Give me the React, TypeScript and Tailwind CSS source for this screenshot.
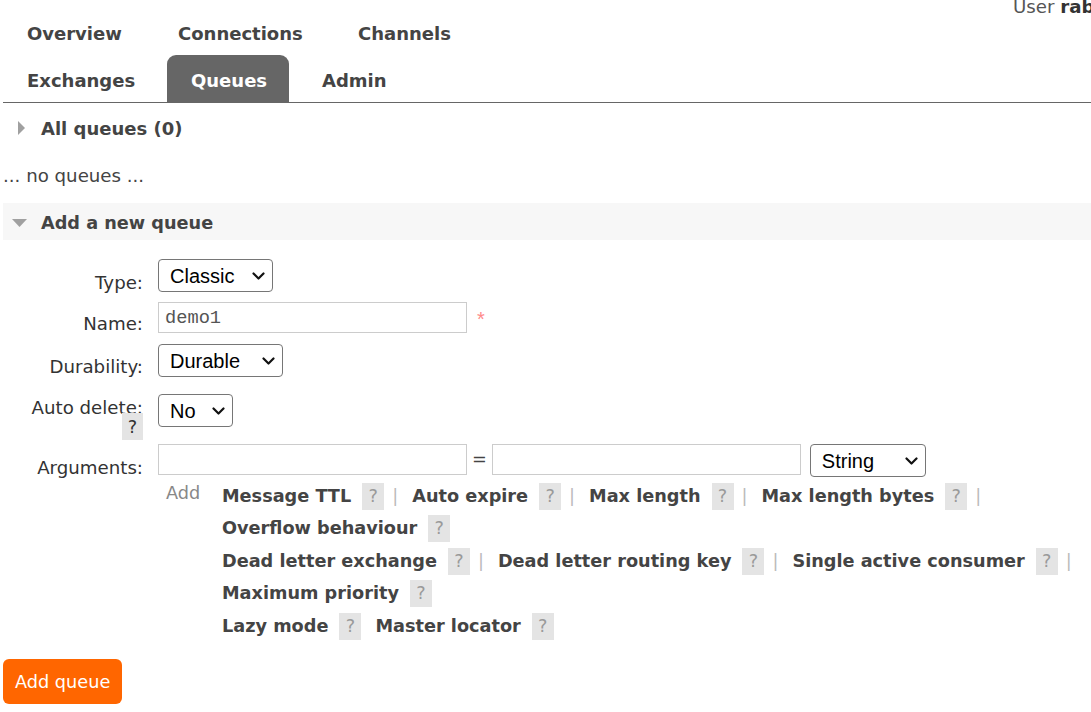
import React from "react";

const font = "font-['DejaVu_Sans',Verdana,sans-serif]";

function Help() {
  return (
    <span className="inline-flex h-[27px] w-[22px] shrink-0 items-center justify-center bg-[#e4e4e4] text-[17.7px] font-normal text-[#9a9a9a]">
      ?
    </span>
  );
}

function Pipe() {
  return <span className="ml-[8px] mr-[14px] text-[17.7px] font-normal text-[#bbb]">|</span>;
}

function Arg({ label, pipe = true }: { label: string; pipe?: boolean }) {
  return (
    <span className="flex items-center">
      <span className="text-[17.7px] font-bold text-[#444]">{label}</span>
      <span className="ml-[11px] flex">
        <Help />
      </span>
      {pipe && <Pipe />}
    </span>
  );
}

function Sel({ value, w }: { value: string; w: string }) {
  return (
    <span className="relative inline-flex">
      <select
        defaultValue={value}
        className={`${w} h-[33px] appearance-none rounded-[4px] border border-[#767676] bg-white pl-[11px] font-['Liberation_Sans',Arial,sans-serif] text-[20px] text-black`}
      >
        <option>{value}</option>
      </select>
      <svg
        width="13"
        height="8"
        viewBox="0 0 13 8"
        className="pointer-events-none absolute right-[8px] top-[13px]"
      >
        <polyline points="1.5,1.5 6.5,6.5 11.5,1.5" fill="none" stroke="#111" strokeWidth="2.2" strokeLinecap="round" strokeLinejoin="round" />
      </svg>
    </span>
  );
}

export default function App() {
  return (
    <div className={`${font} h-[712px] w-[1091px] overflow-hidden bg-white text-[18.2px] text-[#444]`}>
      {/* header user line */}
      <div className="flex h-[8px] justify-end">
        <div className="-mt-[2px] w-[78px] whitespace-nowrap leading-[17.7px] text-[#555]">
          User <b className="text-[#333]">rabbit</b>
        </div>
      </div>

      {/* tabs */}
      <nav className="ml-[3px] border-b border-[#666] text-[18px] font-bold">
        <div className="flex gap-[9px]">
          <a className="flex h-[47px] w-[142px] items-center px-[24px] pt-[3px]">Overview</a>
          <a className="flex h-[47px] w-[171px] items-center px-[24px] pt-[3px]">Connections</a>
          <a className="flex h-[47px] items-center px-[24px] pt-[3px]">Channels</a>
        </div>
        <div className="flex gap-[9px]">
          <a className="flex h-[47px] w-[155px] items-center px-[24px] pt-[3px]">Exchanges</a>
          <a className="flex h-[47px] w-[122px] items-center rounded-t-[9px] bg-[#666] px-[24px] pt-[3px] text-white">
            Queues
          </a>
          <a className="flex h-[47px] items-center px-[24px] pt-[3px]">Admin</a>
        </div>
      </nav>

      {/* All queues */}
      <div className="flex h-[48px] items-center pt-[2px]">
        <svg width="41" height="16" viewBox="0 0 41 16" className="shrink-0">
          <polygon points="18,1 25,8 18,15" fill="#a0a0a0" />
        </svg>
        <span className="text-[18px] font-bold">All queues (0)</span>
      </div>

      <div className="h-[52px] pl-[3px] pt-[14px] leading-[22px] text-[#444]">... no queues ...</div>

      {/* Add a new queue section */}
      <div className="ml-[3px] flex h-[37px] items-center bg-[#f7f7f7] pt-[3px]">
        <svg width="38" height="10" viewBox="0 0 38 10" className="shrink-0">
          <polygon points="9,1 24,1 16.5,9" fill="#a0a0a0" />
        </svg>
        <span className="text-[17.7px] font-bold">Add a new queue</span>
      </div>

      {/* form */}
      <div className="mt-[19px] flex flex-col text-[#333]">
        <div className="flex h-[43px]">
          <div className="w-[143px] pt-[14px] text-right leading-[20px]">Type:</div>
          <div className="ml-[15px]">
            <Sel value="Classic" w="w-[115px]" />
          </div>
        </div>
        <div className="flex h-[42px]">
          <div className="w-[143px] pt-[12px] text-right leading-[20px]">Name:</div>
          <div className="ml-[15px] flex items-start">
            <input
              defaultValue="demo1"
              className="h-[31px] w-[309px] border border-[#ccc] pl-[6px] font-['Liberation_Mono','Courier_New',monospace] text-[18.7px] text-[#555] outline-none"
            />
            <span className="ml-[10px] mt-[2px] font-['Liberation_Sans',Arial,sans-serif] text-[20px] text-[#ff8a8a]">*</span>
          </div>
        </div>
        <div className="flex h-[50px]">
          <div className="w-[143px] pt-[13px] text-right leading-[20px]">Durability:</div>
          <div className="ml-[15px]">
            <Sel value="Durable" w="w-[125px]" />
          </div>
        </div>
        <div className="flex h-[50px]">
          <div className="flex w-[143px] flex-col items-end pt-[4px] leading-[20px]">
            <span>Auto delete:</span>
            <span className="-mt-[5px] flex">
              <span className="inline-flex h-[27px] w-[21px] items-center justify-center bg-[#e4e4e4] text-[17.7px] text-[#333]">?</span>
            </span>
          </div>
          <div className="ml-[15px]">
            <Sel value="No" w="w-[75px]" />
          </div>
        </div>
        <div className="flex h-[36px]">
          <div className="w-[143px] pt-[14px] text-right leading-[20px]">Arguments:</div>
          <div className="ml-[15px] flex items-start">
            <input className="h-[31px] w-[309px] border border-[#ccc] outline-none" />
            <span className="mx-[5px] text-[17.7px] leading-[31px] text-[#444]">=</span>
            <input className="h-[31px] w-[309px] border border-[#ccc] outline-none" />
            <span className="ml-[9px] flex">
              <Sel value="String" w="w-[116px]" />
            </span>
          </div>
        </div>

        <div className="flex">
          <div className="ml-[166px] w-[56px] pt-[3px] text-[17.7px] leading-[20px] text-[#888]">Add</div>
          <div className="flex flex-col">
            <div className="flex h-[32.5px] items-center">
              <Arg label="Message TTL" />
              <Arg label="Auto expire" />
              <Arg label="Max length" />
              <Arg label="Max length bytes" />
            </div>
            <div className="flex h-[32.5px] items-center">
              <Arg label="Overflow behaviour" pipe={false} />
            </div>
            <div className="flex h-[32.5px] items-center">
              <Arg label="Dead letter exchange" />
              <Arg label="Dead letter routing key" />
              <Arg label="Single active consumer" />
            </div>
            <div className="flex h-[32.5px] items-center">
              <Arg label="Maximum priority" pipe={false} />
            </div>
            <div className="flex h-[32.5px] items-center">
              <Arg label="Lazy mode" pipe={false} />
              <span className="ml-[14px]">
                <Arg label="Master locator" pipe={false} />
              </span>
            </div>
          </div>
        </div>
      </div>

      <div className="ml-[3px] mt-[16px]">
        <button className="h-[45px] rounded-[6px] bg-[#ff6600] px-[12px] pt-[3px] text-[17.7px] text-white">Add queue</button>
      </div>
    </div>
  );
}
